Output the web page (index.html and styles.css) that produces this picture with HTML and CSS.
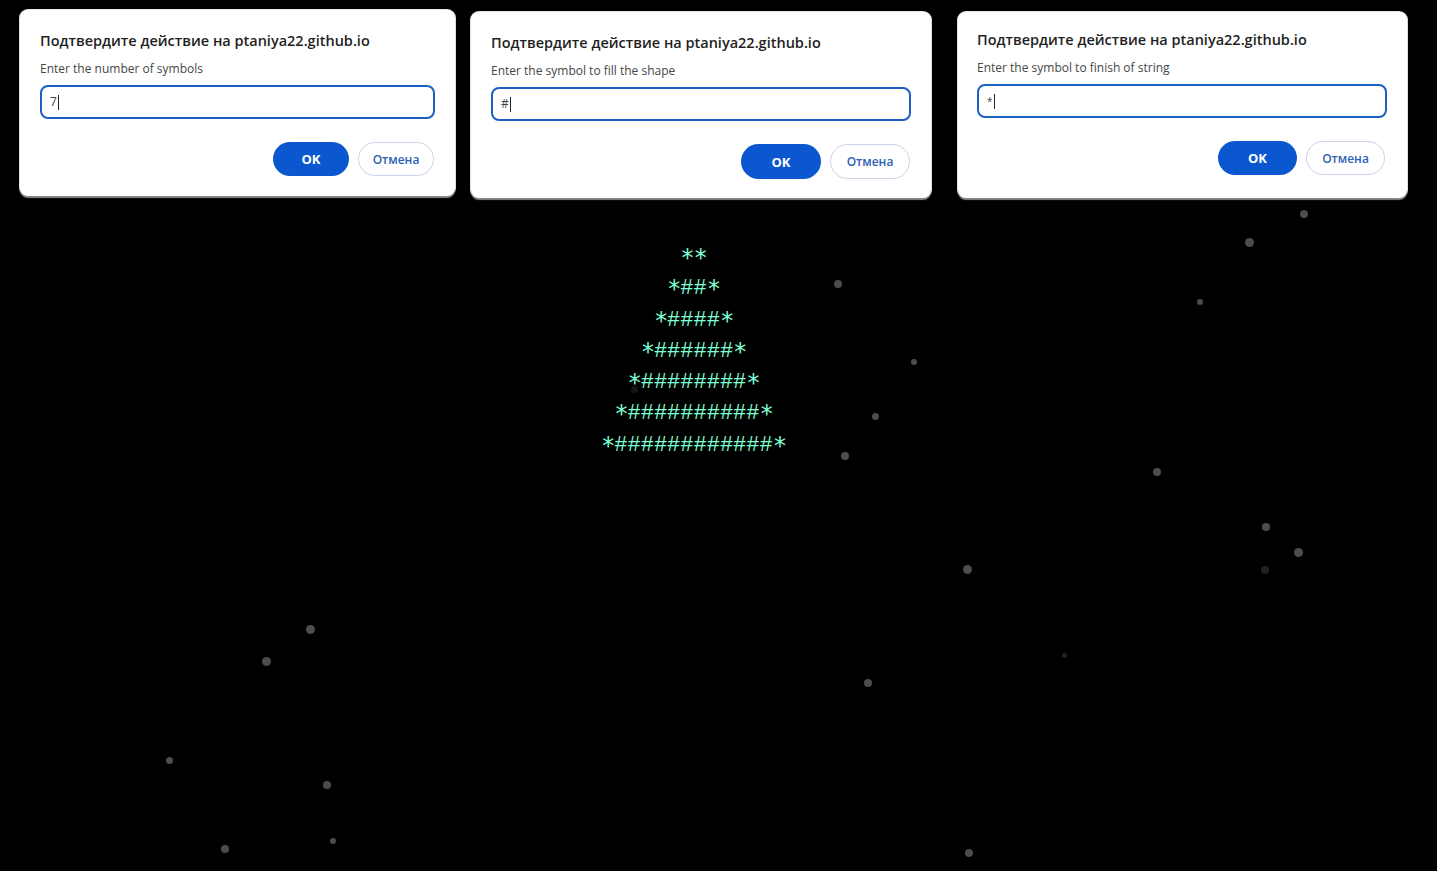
FILE: index.html
```html
<!DOCTYPE html>
<html lang="ru">
<head>
<meta charset="utf-8">
<title>Tree</title>
<link rel="stylesheet" href="styles.css">
</head>
<body>
<div class="snow">
  <span class="flake" style="left:1300px;top:210px;width:8px;height:8px"></span>
  <span class="flake" style="left:1245px;top:238px;width:9px;height:9px"></span>
  <span class="flake" style="left:834px;top:280px;width:8px;height:8px"></span>
  <span class="flake" style="left:1197px;top:299px;width:6px;height:6px"></span>
  <span class="flake" style="left:911px;top:359px;width:6px;height:6px"></span>
  <span class="flake" style="left:872px;top:413px;width:7px;height:7px"></span>
  <span class="flake" style="left:841px;top:452px;width:8px;height:8px"></span>
  <span class="flake" style="left:1153px;top:468px;width:8px;height:8px"></span>
  <span class="flake" style="left:1262px;top:523px;width:8px;height:8px"></span>
  <span class="flake" style="left:1294px;top:548px;width:9px;height:9px"></span>
  <span class="flake dim" style="left:1261px;top:566px;width:8px;height:8px"></span>
  <span class="flake" style="left:963px;top:565px;width:9px;height:9px"></span>
  <span class="flake" style="left:306px;top:625px;width:9px;height:9px"></span>
  <span class="flake" style="left:262px;top:657px;width:9px;height:9px"></span>
  <span class="flake" style="left:864px;top:679px;width:8px;height:8px"></span>
  <span class="flake dim" style="left:1062px;top:653px;width:5px;height:5px"></span>
  <span class="flake" style="left:166px;top:757px;width:7px;height:7px"></span>
  <span class="flake" style="left:323px;top:781px;width:8px;height:8px"></span>
  <span class="flake" style="left:221px;top:845px;width:8px;height:8px"></span>
  <span class="flake" style="left:330px;top:838px;width:6px;height:6px"></span>
  <span class="flake" style="left:965px;top:849px;width:8px;height:8px"></span>
  <span class="flake faint" style="left:631px;top:386px;width:7px;height:7px"></span>
</div>

<div class="dialogs">
  <div class="dialog d1">
    <div class="title">Подтвердите действие на ptaniya22.github.io</div>
    <div class="label">Enter the number of symbols</div>
    <div class="input"><span class="val">7</span><span class="caret"></span></div>
    <div class="actions">
      <button class="btn ok">OK</button>
      <button class="btn cancel">Отмена</button>
    </div>
  </div>
  <div class="dialog d2">
    <div class="title">Подтвердите действие на ptaniya22.github.io</div>
    <div class="label">Enter the symbol to fill the shape</div>
    <div class="input"><span class="val">#</span><span class="caret"></span></div>
    <div class="actions">
      <button class="btn ok">OK</button>
      <button class="btn cancel">Отмена</button>
    </div>
  </div>
  <div class="dialog d3">
    <div class="title">Подтвердите действие на ptaniya22.github.io</div>
    <div class="label">Enter the symbol to finish of string</div>
    <div class="input"><span class="val small">*</span><span class="caret"></span></div>
    <div class="actions">
      <button class="btn ok">OK</button>
      <button class="btn cancel">Отмена</button>
    </div>
  </div>
</div>

<div class="tree-wrap">
<pre class="tree"><span class="edge">*</span><span class="edge">*</span>
<span class="edge">*</span>##<span class="edge">*</span>
<span class="edge">*</span>####<span class="edge">*</span>
<span class="edge">*</span>######<span class="edge">*</span>
<span class="edge">*</span>########<span class="edge">*</span>
<span class="edge">*</span>##########<span class="edge">*</span>
<span class="edge">*</span>############<span class="edge">*</span></pre>
</div>
</body>
</html>
```

FILE: styles.css
```css
html, body {
  margin: 0;
  padding: 0;
  background: #000;
}
body {
  width: 1437px;
  height: 871px;
  overflow: hidden;
  position: relative;
  font-family: "Open Sans", "Noto Sans", sans-serif;
}

.snow {
  position: absolute;
  inset: 0;
  pointer-events: none;
}
.flake {
  position: absolute;
  border-radius: 50%;
  background: #4d4d4d;
  filter: blur(0.7px);
}
.flake.dim {
  background: #222;
}
.flake.faint {
  background: #161616;
}

.dialogs {
  position: relative;
  display: flex;
  align-items: flex-start;
}
.dialog {
  box-sizing: border-box;
  height: 186px;
  background: #fff;
  border-radius: 8px;
  padding: 21px 20px 0 20px;
  display: flex;
  flex-direction: column;
  box-shadow: 0 2px 1px #8a8a8a, 0 0 0 1px #e8e8e8;
}
.d1 { width: 435px; margin-left: 20px; margin-top: 10px; }
.d2 { width: 460px; margin-left: 16px; margin-top: 12px; }
.d3 { width: 449px; margin-left: 27px; margin-top: 12px; padding-top: 18px; padding-left: 19px; }

.title {
  font-size: 14.5px;
  font-weight: 600;
  color: #1f1f1f;
  line-height: 20px;
  white-space: nowrap;
}
.label {
  margin-top: 10px;
  font-size: 12px;
  color: #444746;
  line-height: 16px;
}
.input {
  margin-top: 8px;
  height: 34px;
  box-sizing: border-box;
  border: 2px solid #1c5fc4;
  border-radius: 8px;
  display: flex;
  align-items: center;
  padding-left: 8px;
}
.val {
  font-size: 12px;
  color: #444;
  line-height: 14px;
}
.val.small { font-size: 10px; }
.caret {
  display: inline-block;
  width: 1px;
  height: 15px;
  background: #222;
  margin-left: 1px;
}
.actions {
  margin-top: 23px;
  display: flex;
  justify-content: flex-end;
  gap: 9px;
  padding-right: 1px;
}
.btn {
  height: 34px;
  width: 76px;
  border-radius: 18px;
  font-family: "Open Sans", "Noto Sans", sans-serif;
  font-size: 12px;
  font-weight: 700;
  cursor: pointer;
}
.btn.ok {
  background: #0b57d0;
  color: #fff;
  border: none;
  font-size: 13px;
}
.btn.cancel {
  background: #fff;
  color: #2d5fb4;
  border: 1px solid #c9d4e8;
  font-weight: 600;
}
.d2 .btn { width: 80px; height: 35px; }
.d3 .btn { width: 79px; }
.d3 .actions { gap: 9px; padding-right: 2px; }

.tree-wrap {
  position: relative;
  margin-top: 44px;
  padding-right: 50px;
  text-align: center;
}
.tree {
  display: inline-block;
  margin: 0;
  text-align: center;
  font-family: "Liberation Mono", "Courier New", monospace;
  font-size: 22px;
  line-height: 31.3px;
  color: #7fffd4;
  font-weight: 400;
}
.edge {
  display: inline-block;
  width: 13.2px;
  text-align: center;
  font-family: "DejaVu Sans Mono", monospace;
  font-size: 24px;
  line-height: 0;
  position: relative;
  top: 3px;
}
```
